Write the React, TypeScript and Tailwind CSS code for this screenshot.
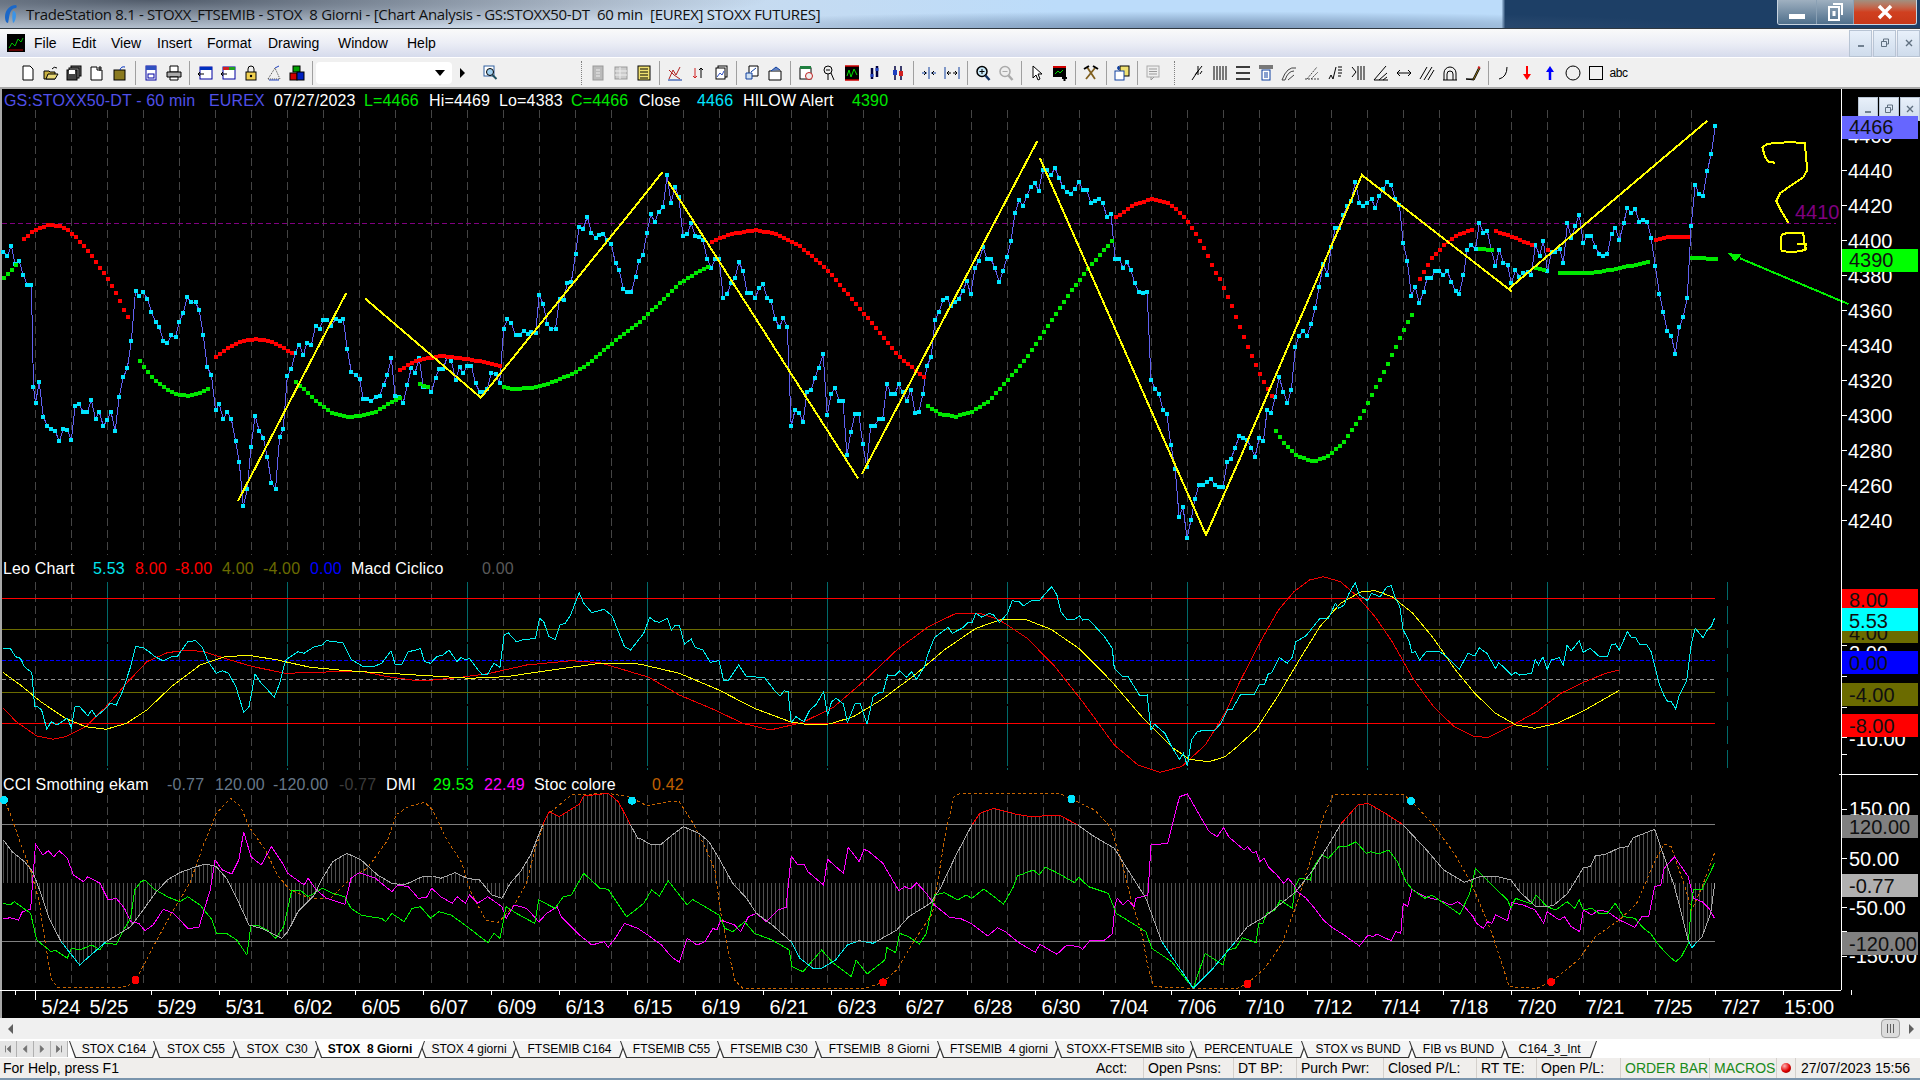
import type { ReactNode } from 'react';

type Pt = [number, number];

// values were read off the reference crops, each crop has its own x scale
const z = (s: string, sx: number, ox: number, oy: number): Pt[] =>
  s.trim().split(/\s+/).map((p) => {
    const [x, y] = p.split(',').map(Number);
    return [x / sx + ox, y / 3 + oy] as Pt;
  });
const t1 = (s: string) => z(s, 2.45, 0, 100);
const t2 = (s: string) => z(s, 2.529, 620, 100);
const t3 = (s: string) => z(s, 2.904, 1220, 100);
const b1 = (s: string) => z(s, 2.45, 0, 550);
const b2 = (s: string) => z(s, 2.529, 620, 570);
const b3 = (s: string) => z(s, 2.904, 1220, 570);

const stitch = (a: Pt[], b: Pt[], c: Pt[]): Pt[] => [
  ...a.filter((p) => p[0] < 638),
  ...b.filter((p) => p[0] >= 638 && p[0] < 1226),
  ...c.filter((p) => p[0] >= 1226),
];
const pts = (p: Pt[]) => p.map(([x, y]) => `${x.toFixed(1)},${y.toFixed(1)}`).join(' ');
const interp = (p: Pt[], x: number) => {
  for (let i = 1; i < p.length; i++) {
    if (x <= p[i][0]) {
      const [x0, y0] = p[i - 1];
      const [x1, y1] = p[i];
      return y0 + ((y1 - y0) * (x - x0)) / (x1 - x0 || 1);
    }
  }
  return p[p.length - 1][1];
};
const grid = (p: Pt[]): Pt[] => {
  const out: Pt[] = [];
  for (let x = 3.5; x <= 1716; x += 4) {
    if (x >= p[0][0] && x <= p[p.length - 1][0]) out.push([x, interp(p, x)]);
  }
  return out;
};

const price = stitch(
  t1(`8,455 18,467 28,438 37,492 47,483 57,525 67,555 77,555 82,860 87,910 96,845 106,950 116,977 126,988 135,992 145,1023 155,987 165,991 175,1020 184,917 194,913 204,936 214,936 224,901 234,957 243,935 253,978 263,960 272,935 282,994 292,890 302,832 312,805 322,722 332,572 341,587 351,575 361,596 371,635 381,665 390,680 400,722 410,729 420,706 430,712 439,665 449,638 459,592 469,607 479,607 488,630 498,706 508,802 518,825 528,930 537,913 547,957 557,935 567,958 577,1022 586,1085 596,1218 606,1168 615,1040 625,948 635,992 645,1013 655,1070 665,1148 675,1167 685,1012 694,986 704,828 714,806 723,760 733,734 743,765 752,730 763,735 773,677 783,686 792,660 802,659 812,677 822,657 832,664 841,658 851,748 861,817 871,824 881,838 890,896 900,896 910,903 920,890 930,887 940,855 949,826 959,775 968,888 978,890 988,908 998,855 1008,803 1017,818 1027,775 1037,860 1047,860 1057,876 1067,835 1076,806 1086,806 1096,770 1106,782 1116,840 1126,802 1135,820 1145,797 1155,797 1165,850 1175,875 1185,875 1194,866 1204,818 1214,823 1224,850 1234,686 1243,658 1253,670 1263,706 1273,706 1283,692 1293,701 1302,696 1312,700 1321,586 1331,613 1341,672 1351,686 1361,686 1371,596 1381,600 1390,550 1400,545 1410,461 1419,380 1429,386 1439,350 1449,398 1459,413 1468,405 1478,401 1488,420 1498,433 1508,490 1517,511 1527,566 1537,575 1547,575 1557,530 1566,482`),
  t2(`48,482 58,466 68,398 78,343 88,366 98,335 109,322 119,225 129,309 139,260 149,292 159,408 170,402 180,370 190,407 200,410 210,420 220,476 231,503 241,478 251,478 261,593 271,581 281,550 291,533 301,487 311,512 322,580 332,580 342,593 352,565 362,553 372,593 382,602 392,656 403,681 413,655 423,680 433,978 443,929 453,938 463,966 473,875 483,870 493,833 503,803 514,763 524,945 534,881 544,865 554,902 564,902 574,1065 584,997 594,943 604,943 614,1033 624,1100 634,977 644,977 654,957 664,957 675,853 685,881 695,881 705,853 715,877 725,903 736,869 746,938 756,935 766,881 776,798 787,771 797,659 807,635 817,601 827,593 837,618 847,606 857,596 867,573 877,544 887,582 898,504 908,483 918,441 928,477 938,477 948,503 959,546 969,512 979,471 989,422 999,340 1009,301 1019,318 1029,288 1039,260 1049,250 1059,272 1069,211 1079,210 1090,226 1100,204 1110,233 1120,260 1130,277 1140,282 1150,267 1161,245 1171,271 1181,271 1191,310 1201,302 1211,296 1221,310 1232,352 1242,343 1252,476 1262,476 1272,503 1282,487 1292,511 1302,550 1312,576 1322,580 1333,575 1343,840 1353,866 1363,881 1373,930 1383,943 1393,1034 1404,1107 1414,1251 1424,1222 1434,1315 1444,1260 1454,1197 1464,1155 1474,1155 1484,1146 1495,1138 1505,1155 1515,1160 1525,1160`),
  t3(`21,1085 32,1077 44,1043 56,1008 68,1013 79,1020 91,1043 102,1070 114,1013 126,1022 137,930 149,939 161,890 172,832 184,875 196,909 207,870 219,741 230,707 242,692 253,707 265,672 277,623 288,560 300,491 312,525 323,440 335,385 347,385 358,345 370,318 381,302 393,245 405,308 416,318 428,308 440,297 451,324 463,287 474,268 486,245 497,256 509,296 521,316 532,428 544,482 556,588 567,560 579,609 591,575 602,533 614,533 625,513 637,513 649,525 660,513 672,545 684,573 695,581 707,525 718,450 730,435 742,447 753,370 765,398 776,392 788,450 800,497 811,450 823,488 835,495 846,550 858,510 869,530 881,518 893,515 904,525 916,434 928,467 939,423 951,513 963,456 974,456 986,446 997,489 1009,370 1020,414 1032,378 1043,344 1055,428 1067,408 1078,408 1090,440 1102,462 1113,467 1125,461 1137,402 1148,385 1160,420 1172,370 1183,323 1194,340 1206,328 1218,366 1229,360 1241,365 1252,413 1264,498 1276,581 1287,635 1299,692 1311,707 1322,762 1334,681 1345,650 1357,593 1368,378 1380,255 1391,282 1403,288 1415,212 1427,161 1438,78`),
);

const hilow: { c: string; p: Pt[] }[] = [
  { c: '#00e800', p: t1('8,535 28,510 38,495') },
  { c: '#ff0000', p: t1('57,418 78,396 100,382 120,375 145,378 165,390 185,412 205,440 225,468 245,505 265,540 285,582 302,628 322,670') },
  { c: '#00e800', p: t1('332,762 350,800 370,830 400,862 430,882 460,888 490,880 518,860') },
  { c: '#ff0000', p: t1('527,773 560,742 590,725 620,718 650,720 685,737 720,765') },
  { c: '#00e800', p: t1('723,845 745,870 780,910 815,940 850,952 880,948 920,935 960,905 985,890') },
  { c: '#ff0000', p: t1('978,810 1020,782 1075,768 1130,775 1180,785 1225,798') },
  { c: '#00e800', p: t1('1027,852 1050,862') },
  { c: '#00e800', p: [...t1('1233,862 1260,867 1300,864 1350,848 1400,822 1440,792 1480,750 1520,708'), ...t2('50,665 100,608 150,550 190,520 230,497')] },
  { c: '#ff0000', p: t2('225,430 270,405 340,390 390,400 450,435 520,505 580,590 640,675 700,765 768,832') },
  { c: '#00e800', p: t2('775,917 810,942 848,950 890,935 930,905 980,840 1030,770 1080,680 1130,590 1180,510 1245,420') },
  { c: '#ff0000', p: [...t2('1250,355 1300,312 1345,298 1390,312 1430,355 1470,430 1510,530'), ...t3('0,540 30,610 60,690 90,765 125,845 150,890')] },
  { c: '#00e800', p: t3('160,992 185,1030 220,1065 270,1086 310,1070 360,1025 405,955 440,885 485,795 530,695 565,628') },
  { c: '#ff0000', p: t3('578,540 610,480 650,435 690,403 740,387') },
  { c: '#00e800', p: t3('742,447 790,450') },
  { c: '#ff0000', p: t3('798,393 850,412 910,436') },
  { c: '#00e800', p: t3('915,503 945,511') },
  { c: '#ff0000', p: t3('945,450 957,450') },
  { c: '#00e800', p: t3('985,519 1080,519 1150,507 1250,484') },
  { c: '#ff0000', p: t3('1262,420 1300,411 1360,411') },
  { c: '#00e800', p: t3('1368,473 1440,477') },
];

const trend: Pt[][] = [
  t1('583,1203 848,580'),
  [...t1('895,596 1178,893 1567,303'), ...t2('108,215')],
  t2('122,245 602,1135'),
  t2('612,1122 1055,124'),
  [...t2('1062,175 1482,1305 1568,1075'), ...t3('412,225 848,575')],
  t3('840,565 1415,62'),
];

const hand = (s: string) => z(s, 3, 1700, 90);

const macdCyan = stitch(
  b1(`8,296 25,295 38,320 50,325 60,350 78,368 85,470 92,470 102,480 115,538 125,515 140,525 152,515 165,505 175,533 184,468 195,470 215,497 225,480 235,500 255,480 270,460 285,465 300,425 320,350 332,290 350,292 365,305 380,320 400,333 420,320 435,318 460,275 480,272 495,290 510,335 530,370 545,362 560,370 578,410 597,487 610,470 625,372 640,400 660,425 672,442 685,400 700,330 730,305 745,310 770,290 790,285 800,272 840,278 860,328 890,350 915,350 935,340 958,302 968,342 985,342 1000,305 1020,300 1030,295 1040,335 1055,340 1070,320 1085,315 1100,300 1120,335 1130,322 1140,330 1150,325 1165,350 1180,372 1195,372 1210,340 1225,352 1235,255 1245,248 1265,275 1280,270 1312,265 1322,205 1332,215 1345,260 1360,268 1372,225 1385,220 1398,195 1419,128 1430,160 1450,188 1480,178 1500,198 1515,245 1530,290 1545,300 1566,260`),
  b2(`45,205 60,190 75,142 90,155 100,157 108,152 120,145 130,180 140,165 150,165 163,222 180,207 190,232 210,240 228,277 250,272 262,330 275,330 300,285 320,320 365,322 390,360 405,378 415,362 425,365 433,458 445,440 465,455 480,420 495,405 515,365 525,437 535,395 547,385 565,402 575,457 595,400 607,400 625,462 640,380 655,368 665,368 677,315 695,318 707,302 725,322 737,305 750,328 770,290 778,255 795,203 830,172 840,190 865,175 880,158 890,158 900,130 915,142 935,130 945,135 960,158 980,130 992,92 1010,95 1020,108 1040,92 1062,90 1080,65 1092,50 1105,75 1115,125 1130,148 1150,148 1162,138 1170,150 1185,148 1210,180 1225,200 1245,235 1250,295 1270,318 1285,320 1315,378 1333,375 1343,480 1352,463 1378,490 1395,530 1415,568 1425,550 1435,588 1445,510 1460,485 1480,480 1505,480 1520,460 1535,425 1550,415 1565,380`),
  b3(`22,420 35,418 60,373 100,373 115,342 130,342 140,312 150,308 172,262 195,280 210,262 220,215 250,197 290,145 315,145 335,100 345,115 360,105 375,70 393,38 405,75 428,92 440,70 465,80 485,50 497,47 510,85 522,110 532,180 550,215 557,248 567,245 580,270 600,243 635,243 660,262 695,298 720,250 740,258 752,233 775,250 800,295 810,278 847,315 858,307 870,315 905,310 915,268 925,285 938,260 950,298 963,270 985,263 997,285 1008,225 1020,243 1043,212 1055,247 1075,235 1100,258 1125,260 1137,225 1148,222 1160,240 1183,185 1195,203 1207,203 1218,222 1240,225 1252,245 1275,340 1290,378 1300,395 1311,395 1323,417 1334,375 1355,333 1368,225 1380,175 1403,203 1415,180 1427,168 1436,145`),
);
const macdRed = stitch(
  b1('8,475 40,515 90,558 130,568 160,560 210,530 260,470 310,400 360,335 410,308 460,300 500,305 550,325 620,350 700,370 800,366 890,365 950,380 1010,390 1060,390 1130,382 1200,370 1290,345 1400,332 1470,338 1530,360 1562,372'),
  b2('70,320 150,375 240,420 310,460 380,480 460,458 540,412 620,330 700,240 780,170 850,130 910,130 960,150 1030,205 1100,290 1170,395 1250,525 1310,585 1365,607 1420,590 1480,525 1530,430 1568,345'),
  b3('60,330 120,210 170,120 215,65 260,30 300,20 350,35 400,80 450,140 500,215 560,325 620,410 680,470 740,500 780,502 850,465 920,425 990,370 1060,335 1120,310 1158,300'),
);
const macdYellow = stitch(
  b1('8,368 50,405 100,455 160,505 210,530 260,538 310,520 360,480 420,410 490,345 550,320 610,316 680,330 760,352 850,362 950,370 1060,378 1150,385 1240,380 1340,362 1470,340 1562,342'),
  b2('60,285 150,310 250,360 340,415 430,455 470,463 530,462 590,440 660,390 740,320 820,240 900,175 960,150 1025,148 1090,178 1160,235 1240,330 1320,440 1400,535 1440,568 1490,575 1530,560 1568,530'),
  b3('50,530 105,478 170,375 230,270 290,170 350,100 410,65 450,62 500,80 560,130 620,205 680,295 740,370 800,430 860,465 915,475 980,460 1060,420 1158,362'),
);

const magenta = stitch(
  b1(`8,1107 25,1103 45,1110 55,1085 75,1078 87,882 105,915 118,902 132,920 145,902 165,925 180,975 205,995 215,980 245,1000 265,1050 285,1045 305,1075 320,1115 340,1120 355,1142 375,1125 400,1078 425,1090 460,1135 487,1133 515,1020 527,930 545,960 568,972 585,930 597,845 615,920 640,945 665,890 690,935 705,970 745,1005 755,985 775,1020 800,1045 845,1063 860,985 880,968 920,985 960,1025 975,1005 1000,1010 1025,1045 1045,1042 1058,1015 1080,1040 1108,1060 1120,1040 1140,1060 1150,1035 1170,1060 1195,1040 1230,1070 1240,1105 1260,1065 1290,1075 1320,1115 1340,1090 1365,1070 1375,1100 1415,1150 1450,1185 1480,1175 1490,1192 1510,1160 1530,1120 1562,1135`),
  b2(`70,1095 105,1125 130,1160 150,1177 170,1105 195,1125 215,1115 235,1075 245,1080 255,1050 290,1065 305,1085 325,1040 345,1030 370,1055 400,1020 420,1012 433,858 450,885 465,882 475,905 515,945 525,868 565,910 577,832 605,875 617,838 630,845 665,880 705,962 720,950 735,957 750,938 775,970 795,1005 835,1043 860,1045 890,1062 930,1098 955,1073 975,1085 1005,1115 1050,1147 1062,1123 1105,1153 1130,1125 1160,1130 1170,1138 1190,1110 1225,1110 1245,1092 1252,1005 1258,985 1272,1005 1285,990 1300,1010 1305,985 1335,975 1343,825 1385,820 1415,680 1435,672 1470,745 1490,785 1510,800 1527,772 1540,805 1568,830`),
  b3(`25,800 70,840 80,830 95,848 105,845 115,875 128,865 140,890 165,915 185,940 198,925 215,945 225,965 250,985 275,1015 300,1050 325,1072 360,1095 405,1128 430,1095 445,1100 455,1092 497,1112 510,1085 525,1090 532,1000 545,1010 557,958 575,970 600,982 635,990 670,1005 690,995 710,1010 735,1040 745,1060 765,1075 777,1055 790,1060 800,1035 835,1052 847,998 880,1005 915,1020 940,1060 950,1025 985,1050 1000,1040 1020,1070 1045,1085 1055,1020 1080,1035 1100,1020 1125,1025 1160,1050 1205,1072 1225,1040 1245,1040 1262,950 1280,945 1290,895 1320,860 1340,890 1360,920 1375,985 1400,995 1420,1015 1436,1045`),
);
const dmi = stitch(
  b1(`8,1060 25,1065 35,1055 75,1090 90,1170 125,1205 135,1200 165,1225 175,1195 195,1200 225,1185 245,1200 255,1180 285,1183 305,1135 320,1105 330,1020 345,995 355,990 375,1015 410,1040 440,1055 460,1040 490,1065 520,1110 530,1150 555,1150 580,1170 605,1215 615,1125 630,1125 655,1140 675,1165 695,1130 715,1020 735,1020 755,1040 790,1015 815,1030 845,1040 860,1075 885,1095 905,1100 935,1105 945,1115 960,1090 990,1115 1010,1075 1030,1070 1055,1105 1075,1085 1105,1095 1145,1130 1195,1178 1210,1150 1225,1165 1240,1070 1265,1090 1310,1120 1320,1050 1360,1075 1380,1040 1400,1035 1430,970 1470,1015 1490,1018 1535,1100 1562,1075`),
  b2(`60,1000 80,960 100,978 122,932 170,1005 183,988 250,1035 265,1075 285,1085 315,1055 340,1090 385,1110 428,1140 435,1190 463,1205 510,1140 540,1180 585,1220 597,1170 625,1212 670,1170 675,1133 697,1148 707,1090 730,1100 757,1122 775,1090 795,975 820,968 855,990 875,975 890,985 920,957 970,1002 995,950 1005,918 1045,900 1060,915 1075,892 1100,905 1150,938 1160,922 1185,950 1235,970 1255,1030 1330,1085 1345,1135 1395,1175 1450,1255 1480,1150 1525,1185 1535,1155 1568,1100`),
  b3(`20,1140 45,1135 65,1103 105,1118 112,1060 125,1060 135,1030 160,1020 175,990 210,1015 218,950 230,925 262,930 270,895 295,855 315,865 345,830 370,828 395,815 425,850 438,845 460,852 490,840 515,875 540,935 560,960 595,985 615,975 650,1000 697,1033 725,970 742,895 790,945 835,990 845,1015 858,985 905,1002 918,975 950,1010 975,1020 1008,995 1030,1015 1043,990 1055,1020 1080,1015 1100,1030 1125,1030 1148,1000 1172,1040 1205,1045 1230,1075 1250,1090 1270,1120 1300,1155 1323,1175 1340,1160 1360,1120 1368,1015 1375,958 1400,958 1436,880`),
);
const cci = stitch(
  b1(`8,870 30,905 60,935 80,965 100,1030 120,1105 150,1175 195,1245 260,1175 320,1130 345,1090 380,1030 410,990 440,968 480,950 505,942 530,950 555,985 580,1045 610,1125 640,1135 665,1150 690,1165 705,1145 730,1085 770,1035 790,985 815,935 850,910 885,930 925,975 960,1000 990,1005 1035,980 1060,978 1080,985 1115,968 1145,985 1175,990 1205,1035 1230,1045 1250,1000 1275,965 1300,915 1330,823 1345,785 1370,800 1420,762 1430,738 1490,730 1515,755 1545,825 1562,865`),
  b2(`50,805 75,822 105,822 130,797 160,770 200,790 225,815 250,865 285,940 320,985 345,1030 385,1065 433,1115 455,1165 490,1197 510,1195 545,1170 575,1125 605,1112 640,1120 700,1080 730,1040 785,1000 810,955 850,855 890,765 910,730 945,715 1000,732 1040,740 1110,735 1155,763 1200,800 1250,835 1290,910 1330,985 1370,1115 1450,1255 1500,1195 1568,1100`),
  b3(`45,1115 80,1070 130,1040 220,965 270,900 330,800 350,763 400,705 430,700 480,730 530,763 600,840 650,900 710,937 760,918 800,918 845,930 870,965 915,1008 950,1010 970,1005 1010,970 1055,893 1075,890 1090,858 1120,853 1160,833 1185,830 1200,803 1245,785 1262,778 1320,950 1360,1112 1370,1133 1400,1100 1425,1030 1437,940`),
);
const stoc = stitch(
  b1(`8,745 25,790 50,880 75,960 95,1050 110,1170 125,1285 140,1312 280,1313 310,1310 332,1290 350,1250 380,1180 420,1090 465,1000 500,880 530,790 565,745 590,770 610,830 650,900 680,975 710,1020 760,1045 810,1045 860,985 900,955 950,870 970,795 1000,770 1040,757 1060,780 1095,870 1130,935 1155,1030 1190,1110 1220,1118 1260,1065 1290,1000 1310,900 1340,795 1400,735 1490,730 1540,740`),
  b2(`70,708 120,695 150,695 185,760 215,830 240,900 255,1030 270,1120 290,1230 310,1255 620,1255 665,1237 700,1200 740,1120 790,1030 800,960 825,780 845,680 860,670 1110,670 1142,687 1200,720 1240,770 1270,880 1295,1000 1320,1090 1335,1190 1350,1250 1450,1255 1520,1255`),
  b3(`50,1255 80,1240 130,1195 180,1120 220,1010 260,880 300,740 330,672 530,672 555,692 620,765 680,850 730,940 790,1090 840,1250 920,1255 960,1237 1040,1170 1090,1100 1160,1050 1210,1000 1260,880 1290,822 1310,830 1350,950 1370,1020 1400,950 1436,850`),
);

const gridX = Array.from({ length: 47 }, (_, i) => 35.5 + 36 * i);
const teal = gridX.filter((_, i) => i % 5 === 2);
const priceAxis: [string, number][] = [['4460', 135.5], ['4440', 170.5], ['4420', 205.5], ['4400', 240.5], ['4380', 275.5], ['4360', 310.5], ['4340', 345.5], ['4320', 380.5], ['4300', 415.5], ['4280', 450.5], ['4260', 485.5], ['4240', 520.5]];
const dates = ['5/25', '5/29', '5/31', '6/02', '6/05', '6/07', '6/09', '6/13', '6/15', '6/19', '6/21', '6/23', '6/27', '6/28', '6/30', '7/04', '7/06', '7/10', '7/12', '7/14', '7/18', '7/20', '7/21', '7/25', '7/27', '15:00'];

function Chart() {
  return (
    <svg viewBox="0 89 1920 929" shapeRendering="crispEdges" className="absolute inset-0 h-full w-full">
      <defs>
        <clipPath id="over"><rect x="0" y="780" width="1840" height="44.5" /></clipPath>
        <clipPath id="under"><rect x="0" y="941.5" width="1840" height="50" /></clipPath>
      </defs>
      <rect x="0" y="89" width="1.5" height="929" fill="#a8a8a8" />
      {gridX.map((x) => (
        <g key={x} stroke="#444444" strokeDasharray="8 4">
          <line x1={x} x2={x} y1={110} y2={555} />
          {!teal.includes(x) && <line x1={x} x2={x} y1={582} y2={770} />}
          <line x1={x} x2={x} y1={795} y2={987} />
        </g>
      ))}
      {[...teal, 1727.5].map((x) => (
        <line key={x} x1={x} x2={x} y1={582} y2={770} stroke="#006a6a" strokeDasharray={x > 1700 ? '18 6' : '60 2'} />
      ))}

      {/* price panel */}
      <line x1="2" x2="1836" y1="223.5" y2="223.5" stroke="#800080" strokeDasharray="5 3" />
      <polyline points={pts(price)} fill="none" stroke="#6060f0" />
      {price.map(([x, y], i) => (
        <rect key={i} x={Math.round(x) - 2} y={Math.round(y) - 2} width="4" height="4" fill="#00e5ff" />
      ))}
      {hilow.map((s, i) =>
        grid(s.p).map(([x, y]) => <rect key={`${i}-${x}`} x={Math.round(x) - 2} y={Math.round(y) - 2} width="4" height="4" fill={s.c} />),
      )}
      {trend.map((p, i) => (
        <polyline key={i} points={pts(p)} fill="none" stroke="#ffff00" strokeWidth="2" />
      ))}
      <polyline points={pts(hand('224,218 205,215 195,200 187,172 200,163 225,158 280,157 315,160 317,190 322,240 310,262 265,292 240,310 229,333 245,365 265,398'))} fill="none" stroke="#ffff00" strokeWidth="2" />
      <polyline points={pts(hand('245,432 275,428 310,430 313,460 318,478 300,484 270,486 245,483 242,460 245,432'))} fill="none" stroke="#ffff00" strokeWidth="2" />
      <polyline points={pts(hand('290,462 318,462 312,482'))} fill="none" stroke="#ffff00" strokeWidth="2" />
      <polyline points={pts(hand('445,642 120,505'))} fill="none" stroke="#00f000" strokeWidth="2" />
      <polygon points={pts(hand('85,490 125,492 105,516'))} fill="#00f000" />
      <text x="1795" y="219" fill="#800080" className="text-[20px]">4410</text>

      {/* macd panel */}
      <line x1="2" x2="1715" y1="598.5" y2="598.5" stroke="#ff0000" />
      <line x1="2" x2="1715" y1="629.5" y2="629.5" stroke="#6b6b00" />
      <line x1="2" x2="1715" y1="660.5" y2="660.5" stroke="#0000ff" strokeDasharray="4 2" />
      <line x1="2" x2="1715" y1="679.5" y2="679.5" stroke="#909090" strokeDasharray="4 3" />
      <line x1="2" x2="1715" y1="692.5" y2="692.5" stroke="#6b6b00" />
      <line x1="2" x2="1715" y1="723.5" y2="723.5" stroke="#ff0000" />
      <polyline points={pts(macdRed)} fill="none" stroke="#f00000" />
      <polyline points={pts(macdYellow)} fill="none" stroke="#ffff00" />
      <polyline points={pts(macdCyan)} fill="none" stroke="#00f0f0" />

      {/* cci panel */}
      {grid(cci).map(([x, y]) => (
        <line key={x} x1={x} x2={x} y1={882.5} y2={y} stroke="#505050" />
      ))}
      <line x1="2" x2="1715" y1="824.5" y2="824.5" stroke="#808080" />
      <line x1="2" x2="1715" y1="941.5" y2="941.5" stroke="#808080" />
      <polyline points={pts(stoc)} fill="none" stroke="#c86400" strokeDasharray="3 2.5" />
      <polyline points={pts(magenta)} fill="none" stroke="#ff00ff" />
      <polyline points={pts(dmi)} fill="none" stroke="#00f000" />
      <polyline points={pts(cci)} fill="none" stroke="#a8a8a8" />
      <polyline points={pts(cci)} fill="none" stroke="#ff0000" clipPath="url(#over)" />
      <polyline points={pts(cci)} fill="none" stroke="#00f0f0" clipPath="url(#under)" />
      {[[4, 800], [632, 800.7], [1071.5, 799], [1411, 801]].map(([x, y]) => (
        <circle key={x} cx={x} cy={y} r="4" fill="#00e5ff" />
      ))}
      {[[135.5, 980], [883, 982.3], [1247.5, 984], [1551, 982]].map(([x, y]) => (
        <circle key={x} cx={x} cy={y} r="4" fill="#ff0000" />
      ))}

      {/* time axis */}
      <line x1="0" x2="1841" y1="990.5" y2="990.5" stroke="#fff" />
      <line x1="1841" x2="1841" y1="89" y2="990" stroke="#fff" />
      <line x1="35" x2="35" y1="990" y2="1000" stroke="#fff" />
      <line x1="15" x2="15" y1="990" y2="995" stroke="#fff" />
      <text x="61" y="1014" fill="#fff" textAnchor="middle" className="text-[20px]">5/24</text>
      {dates.map((d, i) => (
        <g key={d}>
          <line x1={151 + 68 * i} x2={151 + 68 * i} y1="990" y2="995" stroke="#fff" />
          <text x={109 + 68 * i} y="1014" fill="#fff" textAnchor="middle" className="text-[20px]">{d}</text>
        </g>
      ))}

      {/* value axis */}
      {priceAxis.map(([l, y]) => (
        <g key={l}>
          <line x1="1841" x2="1847" y1={y} y2={y} stroke="#fff" />
          <text x="1848" y={y + 7} fill="#fff" className="text-[20px]">{l}</text>
        </g>
      ))}
      {[645.5, 676.5, 707.5, 737.5, 754.5, 809.5, 858.5, 907.5, 931.5, 956.5].map((y) => (
        <line key={y} x1="1841" x2="1847" y1={y} y2={y} stroke="#fff" />
      ))}
      <line x1="1839" x2="1918" y1="774.5" y2="774.5" stroke="#fff" />
      {[['2.00', 660], ['-10.00', 745.7], ['150.00', 816], ['50.00', 865.7], ['-50.00', 914.7], ['-150.00', 963]].map(([l, y]) => (
        <text key={l} x="1849" y={y} fill="#fff" className="text-[20px]">{l}</text>
      ))}
      {[
        ['4466', 116, 23, 134.3, '#6666ff'],
        ['4390', 249, 23, 267.3, '#00ff00'],
        ['8.00', 589, 19, 607, '#ff0000'],
        ['4.00', 631, 12, 640, '#6b6b00'],
        ['5.53', 608, 23, 628, '#00ffff'],
        ['0.00', 651, 23, 670, '#0000ff'],
        ['-4.00', 683, 23, 701.7, '#6b6b00'],
        ['-8.00', 714, 23, 732.7, '#ff0000'],
        ['120.00', 815, 23, 834, '#808080'],
        ['-0.77', 874, 23, 893, '#b0b0b0'],
        ['-120.00', 932, 23, 951, '#808080'],
      ].map(([l, y, h, b, c]) => (
        <g key={l as string}>
          <rect x="1842" y={y} width="76" height={h} fill={c as string} />
          <text x="1849" y={b} fill="#101010" className="text-[20px]">{l}</text>
        </g>
      ))}
    </svg>
  );
}

type Item = { t: string; c: string; w: string };
const legend1: Item[] = [
  { t: 'GS:STOXX50-DT - 60 min', c: 'text-[#5050e8]', w: 'w-[205px]' },
  { t: 'EUREX', c: 'text-[#5050e8]', w: 'w-[65px]' },
  { t: '07/27/2023', c: 'text-white', w: 'w-[90px]' },
  { t: 'L=4466', c: 'text-[#00e800]', w: 'w-[65px]' },
  { t: 'Hi=4469', c: 'text-white', w: 'w-[70px]' },
  { t: 'Lo=4383', c: 'text-white', w: 'w-[72px]' },
  { t: 'C=4466', c: 'text-[#00e800]', w: 'w-[68px]' },
  { t: 'Close', c: 'text-white', w: 'w-[58px]' },
  { t: '4466', c: 'text-[#00e5ff]', w: 'w-[46px]' },
  { t: 'HILOW Alert', c: 'text-white', w: 'w-[109px]' },
  { t: '4390', c: 'text-[#00e800]', w: 'w-[40px]' },
];
const legend2: Item[] = [
  { t: 'Leo Chart', c: 'text-white', w: 'w-[90px]' },
  { t: '5.53', c: 'text-[#00e5ee]', w: 'w-[42px]' },
  { t: '8.00', c: 'text-[#ff0000]', w: 'w-[40px]' },
  { t: '-8.00', c: 'text-[#ff0000]', w: 'w-[47px]' },
  { t: '4.00', c: 'text-[#6b6b00]', w: 'w-[41px]' },
  { t: '-4.00', c: 'text-[#6b6b00]', w: 'w-[47px]' },
  { t: '0.00', c: 'text-[#0000ff]', w: 'w-[41px]' },
  { t: 'Macd Ciclico', c: 'text-white', w: 'w-[131px]' },
  { t: '0.00', c: 'text-[#5a5a5a]', w: 'w-[40px]' },
];
const legend3: Item[] = [
  { t: 'CCI Smothing ekam', c: 'text-white', w: 'w-[164px]' },
  { t: '-0.77', c: 'text-[#667788]', w: 'w-[48px]' },
  { t: '120.00', c: 'text-[#667788]', w: 'w-[58px]' },
  { t: '-120.00', c: 'text-[#667788]', w: 'w-[66px]' },
  { t: '-0.77', c: 'text-[#3c3c3c]', w: 'w-[47px]' },
  { t: 'DMI', c: 'text-white', w: 'w-[47px]' },
  { t: '29.53', c: 'text-[#00ff00]', w: 'w-[51px]' },
  { t: '22.49', c: 'text-[#ff00ff]', w: 'w-[50px]' },
  { t: 'Stoc colore', c: 'text-white', w: 'w-[118px]' },
  { t: '0.42', c: 'text-[#c06000]', w: 'w-[40px]' },
];

function Legend({ items, className }: { items: Item[]; className: string }) {
  return (
    <div className={`absolute flex h-[18px] whitespace-nowrap text-[16px] leading-[18px] tracking-[0.15px] ${className}`}>
      {items.map((it, i) => (
        <span key={i} className={`${it.w} ${it.c}`}>{it.t}</span>
      ))}
    </div>
  );
}

function Ic({ children }: { children: ReactNode }) {
  return (
    <span className="flex h-[24px] w-[23px] shrink-0 items-center justify-center">
      <svg viewBox="0 0 16 16" className="h-4 w-4">{children}</svg>
    </span>
  );
}
const Sep = () => <span className="mx-[3.5px] h-[24px] w-px shrink-0 bg-[#a0a0a0]" />;
const Grip = ({ className }: { className: string }) => <span className={`h-[24px] w-0 shrink-0 border-l border-dotted border-[#808080] ${className}`} />;

const k = { stroke: '#000', fill: 'none' };
const g = { stroke: '#999', fill: 'none' };

function Toolbar() {
  return (
    <div className="flex h-[32px] shrink-0 items-center border-t border-b-2 border-t-white border-b-[#a8a8a8] bg-[#f0f0f0] pl-[16px]">
      <Ic><path d="M3 1h7l3 3v11H3z" fill="#fff" stroke="#000" /></Ic>
      <Ic><path d="M1 6h5l1 1h5v7H1z" fill="#c8b040" stroke="#000" /><path d="M3 14l2-5h10l-3 5z" fill="#e8d878" stroke="#000" /><path d="M9 4q2-3 5-1" {...k} /></Ic>
      <Ic><rect x="5" y="1" width="10" height="10" fill="#666" stroke="#000" /><rect x="3" y="3" width="10" height="10" fill="#999" stroke="#000" /><rect x="1" y="5" width="10" height="10" fill="#444" stroke="#000" /><rect x="3" y="5" width="6" height="4" fill="#fff" /></Ic>
      <Ic><path d="M2 2h6v3h5v10H2z" fill="#fff" stroke="#000" /><path d="M11 1v5M9 3h4" {...k} /></Ic>
      <Ic><rect x="2" y="5" width="11" height="10" fill="#8a7a20" stroke="#000" /><path d="M8 5q1-4 5-3" stroke="#0030c0" fill="none" /></Ic>
      <Sep />
      <Ic><rect x="3" y="1" width="10" height="14" fill="#fff" stroke="#0000a0" /><rect x="3" y="1" width="10" height="4" fill="#3050c0" /><rect x="5" y="9" width="6" height="4" stroke="#0000a0" fill="none" /></Ic>
      <Ic><path d="M4 1h8v6H4z" fill="#fff" stroke="#000" /><path d="M1 7h14v5H1z" fill="#aaa" stroke="#000" /><path d="M4 12h8v3H4z" fill="#fff" stroke="#000" /></Ic>
      <Sep />
      <Ic><rect x="3" y="2" width="12" height="12" fill="#fff" stroke="#0000a0" /><rect x="3" y="2" width="12" height="3" fill="#0030c0" /><path d="M1 9h6M1 9l2-2M1 9l2 2" {...k} /></Ic>
      <Ic><rect x="3" y="2" width="12" height="12" fill="#fff" stroke="#0000a0" /><rect x="3" y="2" width="6" height="3" fill="#d02020" /><rect x="9" y="2" width="6" height="3" fill="#20a020" /><path d="M1 9h6M1 9l2-2M1 9l2 2" {...k} /></Ic>
      <Ic><rect x="3" y="7" width="10" height="8" fill="#f0d050" stroke="#000" /><path d="M5 7V4a3 3 0 016 0v3" {...k} /><circle cx="8" cy="11" r="1.2" /></Ic>
      <Ic><path d="M2 14L9 3l5 11z" stroke="#444" fill="none" strokeDasharray="1 1" /><path d="M9 3l4-2M3 15h10" stroke="#2040c0" fill="none" /></Ic>
      <Ic><rect x="4" y="1" width="7" height="6" fill="#00a000" stroke="#000" /><rect x="1" y="8" width="7" height="7" fill="#d00000" stroke="#000" /><rect x="8" y="7" width="7" height="8" fill="#0020c0" stroke="#000" /></Ic>
      <Sep />
      <div className="relative h-[22px] w-[136px] shrink-0 rounded-sm bg-white">
        <span className="absolute top-[8px] right-[7px] h-0 w-0 border-x-[5px] border-t-[6px] border-x-transparent border-t-black" />
      </div>
      <span className="ml-[8px] h-0 w-0 shrink-0 border-y-[5px] border-l-[5px] border-y-transparent border-l-black" />
      <span className="ml-[13px]" />
      <Ic><rect x="2" y="1" width="10" height="10" fill="#fff" stroke="#3060a0" /><circle cx="8" cy="7" r="3.5" fill="#a0d0f0" stroke="#000" /><path d="M10.5 10l4 4" stroke="#205060" strokeWidth="2" /></Ic>
      <Grip className="ml-[80px] mr-[4px]" />
      <Ic><rect x="3" y="1" width="10" height="14" fill="#bbb" stroke="#999" /><path d="M6 5h4M6 8h4M6 11h4" stroke="#eee" /></Ic>
      <Ic><rect x="2" y="2" width="12" height="12" fill="#ccc" stroke="#999" /><path d="M2 6h12M2 10h12M7 2v12" stroke="#eee" /></Ic>
      <Ic><rect x="2" y="1" width="12" height="14" fill="#f0e070" stroke="#000" /><path d="M4 4h8M4 7h8M4 10h8M4 13h8" {...k} /></Ic>
      <Sep />
      <Ic><path d="M2 14l4-9 3 5 4-8M2 5l5 5 6 4" stroke="#b02020" fill="none" /><path d="M1 15h14" stroke="#0030a0" /></Ic>
      <Ic><path d="M5 3v10M3 11l2 2 2-2" stroke="#d02020" fill="none" /><path d="M11 13V3M9 5l2-2 2 2" stroke="#000" fill="none" /></Ic>
      <Ic><rect x="5" y="1" width="9" height="11" fill="#fff" stroke="#000" /><rect x="3" y="3" width="9" height="11" fill="#fff" stroke="#000" /><path d="M4 12l3-4 2 2 2-4" stroke="#3050c0" fill="none" /></Ic>
      <Sep />
      <Ic><path d="M5 1h9v10H5z" fill="#fff" stroke="#000" /><path d="M2 8h6v6H2z" fill="#d0e0f0" stroke="#1040a0" /><path d="M7 7l5-4" stroke="#1040a0" /></Ic>
      <Ic><path d="M2 6h12v9H2z" fill="#fff" stroke="#000" /><path d="M4 6l5-4 4 3" stroke="#1040a0" fill="#6080c0" /></Ic>
      <Sep />
      <Ic><rect x="2" y="3" width="11" height="11" fill="#fff" stroke="#000" /><rect x="2" y="1" width="11" height="3" fill="#208040" /><circle cx="11" cy="11" r="3.5" fill="#eee" stroke="#c02020" /></Ic>
      <Ic><circle cx="7" cy="5" r="4" fill="#eee" stroke="#000" /><path d="M7 9v6M10 8l3 7M5 5h4" {...k} /></Ic>
      <Ic><rect x="1" y="1" width="14" height="14" fill="#000" /><path d="M3 11l2-6 2 7 3-8 3 6" stroke="#00e000" fill="none" /><path d="M1 1h14M1 15h14" stroke="#d00000" strokeWidth="1.5" /></Ic>
      <Ic><path d="M5 3v11M10 1v11" stroke="#000040" strokeWidth="2.5" /><rect x="3.5" y="9" width="3" height="3" fill="#2040c0" /><rect x="8.5" y="3" width="3" height="3" fill="#2040c0" /></Ic>
      <Ic><path d="M5 1v14M11 1v14" stroke="#000040" strokeWidth="1.5" /><rect x="3" y="5" width="4" height="5" fill="#2040c0" /><rect x="9" y="6" width="4" height="5" fill="#d02020" /></Ic>
      <Sep />
      <Ic><path d="M8 2v12M1 8h5M10 8h5" stroke="#1040a0" /><path d="M3 6l2 2-2 2M13 6l-2 2 2 2" {...k} /></Ic>
      <Ic><path d="M1 2v12M15 2v12" stroke="#1040a0" /><path d="M3 8h4M9 8h4M3 8l2-2M3 8l2 2M13 8l-2-2M13 8l-2 2" {...k} /></Ic>
      <Sep />
      <Ic><circle cx="7" cy="6.5" r="5" fill="#c8e8f8" stroke="#000" strokeWidth="1.5" /><path d="M7 4v5M4.5 6.5h5" stroke="#000" /><path d="M10.5 10.5l4 4.5" stroke="#103060" strokeWidth="2.5" /></Ic>
      <Ic><circle cx="7" cy="6.5" r="5" fill="#eee" stroke="#aaa" strokeWidth="1.5" /><path d="M4.5 6.5h5" stroke="#aaa" /><path d="M10.5 10.5l4 4.5" stroke="#aaa" strokeWidth="2.5" /></Ic>
      <Sep />
      <Ic><path d="M4 1v12l3-3 2 5 2-1-2-5h4z" fill="#fff" stroke="#000" /></Ic>
      <Ic><rect x="1" y="3" width="13" height="9" fill="#000" /><path d="M1 2h13" stroke="#d00000" strokeWidth="2" /><path d="M3 9l3-3 2 2 3-3" stroke="#00e000" fill="none" /><path d="M10 13h5M12.5 10v6" stroke="#000" strokeWidth="2" /></Ic>
      <Sep />
      <Ic><path d="M3 14L12 3M12 14L4 2" stroke="#806020" strokeWidth="1.8" /><path d="M1 4l5-3M10 1l5 3" stroke="#000" strokeWidth="2" /></Ic>
      <Sep />
      <Ic><rect x="6" y="1" width="9" height="10" fill="#f0e070" stroke="#000" /><rect x="1" y="6" width="9" height="9" fill="#fff" stroke="#1040a0" /><path d="M3 3h3M4.5 1v4" stroke="#1040a0" strokeWidth="1.5" /></Ic>
      <Sep />
      <Ic><rect x="2" y="1" width="12" height="11" fill="#eee" stroke="#aaa" /><path d="M4 4h8M4 6.5h8M4 9h8M6 12v3l3-3" {...g} /></Ic>
      <Grip className="mx-[10px]" />
      <Ic><path d="M3 15L9 6M9 1v9M13 1L6 10M13 6l-2 3" {...k} /></Ic>
      <Ic><path d="M2 1v14M5 1v14M8 1v14M11 1v14M14 1v14" {...k} /></Ic>
      <Ic><path d="M1 2h14M1 8h14M1 14h14" stroke="#000" strokeWidth="1.3" /></Ic>
      <Ic><path d="M1 1h14M1 3h14" {...k} /><rect x="4" y="5" width="8" height="10" fill="#fff" stroke="#1040a0" /><path d="M6 8h4M6 10h4M6 12h4" stroke="#1040a0" /></Ic>
      <Ic><path d="M1 15q5-14 14-12M4 15q3-9 9-9M7 15l6-5M1 15h3" stroke="#444" fill="none" /></Ic>
      <Ic><path d="M1 14h14M3 14L13 2M7 14L14 7" stroke="#444" fill="none" strokeDasharray="2 1" /></Ic>
      <Ic><path d="M2 14l2-4 2 4 3-12M11 2h4M11 5h4M11 8h4M11 11h3" {...k} /></Ic>
      <Ic><path d="M2 2l4 5-4 5M8 1v14M11 1v14M14 1v14" {...k} /></Ic>
      <Ic><path d="M1 15L13 1M1 15h14M6 15L14 8M10 15l4-3" {...k} /></Ic>
      <Ic><path d="M1 8h14M1 8l3-3M1 8l3 3M15 8l-3-3M15 8l-3 3" {...k} /></Ic>
      <Ic><path d="M1 14L8 2M5 15l8-13M9 15l6-10" {...k} /></Ic>
      <Ic><path d="M2 15V8a6 6 0 0112 0v7M5 15V9a3 3 0 016 0v6M1 15h14" {...k} /></Ic>
      <Ic><path d="M1 14h7l6-12 1 1-6 12z" fill="#f0c020" stroke="#000" /><path d="M13 2l2 1" stroke="#d02020" strokeWidth="2" /></Ic>
      <Sep />
      <Ic><path d="M3 14q8-2 8-12" {...k} /></Ic>
      <Ic><path d="M8 1v9" stroke="#ff0000" strokeWidth="2" /><path d="M4 9h8l-4 6z" fill="#ff0000" /></Ic>
      <Ic><path d="M8 15V6" stroke="#0000ff" strokeWidth="2.5" /><path d="M4 7h8L8 1z" fill="#0000ff" /></Ic>
      <Ic><circle cx="8" cy="8" r="7" {...k} /></Ic>
      <Ic><rect x="1.5" y="1.5" width="13" height="13" {...k} /></Ic>
      <span className="w-[23px] shrink-0 text-center text-[12px] tracking-[-0.5px] text-black">abc</span>
    </div>
  );
}

const menu = [
  { t: 'File', w: 'w-[38px]' },
  { t: 'Edit', w: 'w-[39px]' },
  { t: 'View', w: 'w-[46px]' },
  { t: 'Insert', w: 'w-[50px]' },
  { t: 'Format', w: 'w-[61px]' },
  { t: 'Drawing', w: 'w-[70px]' },
  { t: 'Window', w: 'w-[69px]' },
  { t: 'Help', w: 'w-[40px]' },
];

function MdiButtons({ className, size }: { className: string; size: string }) {
  return (
    <div className={`flex gap-px ${className}`}>
      {['min', 'restore', 'close'].map((b) => (
        <span key={b} className={`flex items-center justify-center border border-[#b8c4d4] bg-gradient-to-b from-[#e8f0fa] to-[#cfdcec] ${size}`}>
          {b === 'min' && <span className="mt-[5px] h-[2px] w-[6px] bg-[#708090]" />}
          {b === 'restore' && (
            <svg viewBox="0 0 10 10" className="h-[10px] w-[10px]"><path d="M3.5 3V1h5v5h-2M1.5 3.5h5v5h-5z" fill="none" stroke="#607080" /></svg>
          )}
          {b === 'close' && (
            <svg viewBox="0 0 10 10" className="h-[10px] w-[10px]"><path d="M2 2l6 6M8 2l-6 6" stroke="#607080" strokeWidth="1.4" /></svg>
          )}
        </span>
      ))}
    </div>
  );
}

const tabs = [
  { t: 'STOX C164', w: 'w-[90px]' },
  { t: 'STOX C55', w: 'w-[86px]' },
  { t: 'STOX  C30', w: 'w-[88px]' },
  { t: 'STOX  8 Giorni', w: 'w-[110px]', on: true },
  { t: 'STOX 4 giorni', w: 'w-[100px]' },
  { t: 'FTSEMIB C164', w: 'w-[113px]' },
  { t: 'FTSEMIB C55', w: 'w-[103px]' },
  { t: 'FTSEMIB C30', w: 'w-[104px]' },
  { t: 'FTSEMIB  8 Giorni', w: 'w-[128px]' },
  { t: 'FTSEMIB  4 giorni', w: 'w-[124px]' },
  { t: 'STOXX-FTSEMIB sito', w: 'w-[141px]' },
  { t: 'PERCENTUALE', w: 'w-[117px]' },
  { t: 'STOX vs BUND', w: 'w-[114px]' },
  { t: 'FIB vs BUND', w: 'w-[99px]' },
  { t: 'C164_3_Int', w: 'w-[95px]' },
];

function TabBar() {
  return (
    <div className="flex h-[17px] shrink-0 items-stretch bg-white">
      <div className="flex w-[75px] shrink-0">
        {['M3 2v8M9 2L5 6l4 4z', 'M8 2L4 6l4 4z', 'M4 2l4 4-4 4z', 'M9 2v8M3 2l4 4-4 4z'].map((d) => (
          <span key={d} className="flex h-[16px] w-[17px] items-center justify-center border-r border-[#b0b0b0] bg-[#e4e4e4]">
            <svg viewBox="0 0 12 12" className="h-[10px] w-[10px]"><path d={d} fill="#707070" stroke="#707070" /></svg>
          </span>
        ))}
      </div>
      {tabs.map((tab) => (
        <div
          key={tab.t}
          className={`relative -ml-[6px] h-[17px] shrink-0 bg-[#303030] [clip-path:polygon(0_0,100%_0,calc(100%-6px)_100%,6px_100%)] ${tab.w} ${tab.on ? 'z-10' : ''}`}
        >
          <div
            className={`absolute inset-x-[1px] top-0 bottom-[1px] flex items-center justify-center whitespace-pre text-[12px] [clip-path:polygon(0_0,100%_0,calc(100%-6px)_100%,6px_100%)] ${tab.on ? 'bg-white font-bold' : 'bg-[#f4f4f4]'}`}
          >
            {tab.t}
          </div>
        </div>
      ))}
    </div>
  );
}

const panes = [
  { t: 'Acct:', w: 'w-[52px]', c: 'text-black' },
  { t: 'Open Psns:', w: 'w-[90px]', c: 'text-black' },
  { t: 'DT BP:', w: 'w-[63px]', c: 'text-black' },
  { t: 'Purch Pwr:', w: 'w-[87px]', c: 'text-black' },
  { t: 'Closed P/L:', w: 'w-[93px]', c: 'text-black' },
  { t: 'RT TE:', w: 'w-[60px]', c: 'text-black' },
  { t: 'Open P/L:', w: 'w-[84px]', c: 'text-black' },
  { t: 'ORDER BAR', w: 'w-[89px]', c: 'text-[#1a8a1a]' },
  { t: 'MACROS', w: 'w-[67px]', c: 'text-[#1a8a1a]' },
];

export default function App() {
  return (
    <div className="flex h-screen w-screen flex-col overflow-hidden font-['Liberation_Sans',Arial,sans-serif] text-black">
      {/* title bar */}
      <div className="relative flex h-[28px] shrink-0 items-center bg-[radial-gradient(ellipse_32%_110%_at_8%_0%,rgba(45,55,70,0.75),rgba(45,55,70,0)),radial-gradient(ellipse_28%_60%_at_62%_100%,rgba(70,95,130,0.6),rgba(70,95,130,0)),linear-gradient(to_right,#b8c4d2_0%,#ccdaea_30%,#bcdcfa_55%,#bcdcfa_78.2%,#1d3f66_78.4%,#1d3f66_100%)] pl-[3px]">
        <svg viewBox="0 0 16 20" className="h-[22px] w-[16px] shrink-0">
          <path d="M13 1C6 1 2 7 2 13c0 3 1 6 3 6 1-3 1-9 3-12 1-2 3-3 5-3 1-1 1-2 0-3z" fill="#1c68c8" />
          <path d="M10 7c-1 3-1 8 0 12 2-1 3-5 3-8 0-2-1-4-3-4z" fill="#3a94e8" />
        </svg>
        <span className="ml-[7px] whitespace-pre font-['Open_Sans',sans-serif] text-[15px] tracking-[-0.32px] text-[#101010]">
          TradeStation 8.1 - STOXX_FTSEMIB - STOX  8 Giorni - [Chart Analysis - GS:STOXX50-DT  60 min  [EUREX] STOXX FUTURES]
        </span>
        <div className="absolute top-0 right-[3px] flex h-[25px] overflow-hidden rounded-b-[3px] border border-t-0 border-[#c8d4e0]">
          <span className="flex w-[39px] items-end justify-center border-r border-[#8aa0b4] bg-gradient-to-b from-[#9fb0c0] to-[#50708c] pb-[5px]">
            <span className="h-[5px] w-[16px] bg-white" />
          </span>
          <span className="flex w-[37px] items-center justify-center border-r border-[#8aa0b4] bg-gradient-to-b from-[#9fb0c0] to-[#50708c]">
            <svg viewBox="0 0 16 18" className="h-[18px] w-[16px]"><path d="M6 1h9v11M2 4h10v13H2z" fill="none" stroke="#fff" strokeWidth="2" /><rect x="5.5" y="8" width="3" height="5" fill="#fff" /></svg>
          </span>
          <span className="flex w-[62px] items-center justify-center bg-gradient-to-b from-[#a09080] via-[#d04020] to-[#c83818]">
            <svg viewBox="0 0 18 16" className="h-[16px] w-[18px]"><path d="M3 2l12 12M15 2L3 14" stroke="#fff" strokeWidth="3.5" /></svg>
          </span>
        </div>
      </div>
      <div className="h-px shrink-0 bg-[#303840]" />

      {/* menu */}
      <div className="flex h-[28px] shrink-0 items-center bg-gradient-to-b from-[#fafafa] via-[#eceef6] to-[#d6dbec] pl-[7px] text-[14px]">
        <svg viewBox="0 0 18 18" className="mr-[9px] h-[18px] w-[18px] shrink-0">
          <rect width="18" height="18" fill="#000" />
          <path d="M2 14l3-5 3 3 3-7 3 3 2-4" fill="none" stroke="#00c000" />
          <path d="M2 16h14" stroke="#c00000" />
        </svg>
        {menu.map((m) => (
          <span key={m.t} className={m.w}>{m.t}</span>
        ))}
        <MdiButtons className="ml-auto" size="h-[27px] w-[23px]" />
      </div>

      <Toolbar />

      {/* chart window */}
      <div className="relative min-h-0 flex-1 bg-black">
        <MdiButtons className="absolute top-[8px] right-0" size="h-[24px] w-[20px]" />
        <Chart />
        <Legend items={legend1} className="top-[3px] left-[4px]" />
        <Legend items={legend2} className="top-[471px] left-[3px]" />
        <Legend items={legend3} className="top-[687px] left-[3px]" />
      </div>

      {/* scrollbar */}
      <div className="flex h-[21px] shrink-0 items-center bg-[#f0f0f0] pr-[6px] pl-[8px]">
        <span className="h-0 w-0 border-y-[5px] border-r-[5px] border-y-transparent border-r-[#606060]" />
        <span className="ml-auto flex h-[19px] w-[19px] items-center justify-center gap-[2px] rounded-sm border border-[#a0a0a0] bg-[#dcdcdc]">
          <span className="h-[9px] w-px bg-[#606060]" />
          <span className="h-[9px] w-px bg-[#606060]" />
          <span className="h-[9px] w-px bg-[#606060]" />
        </span>
        <span className="ml-[9px] h-0 w-0 border-y-[5px] border-l-[5px] border-y-transparent border-l-[#606060]" />
      </div>
      <div className="h-[2px] shrink-0 bg-white" />

      <TabBar />

      {/* status bar */}
      <div className="flex h-[20px] shrink-0 items-center whitespace-nowrap bg-[#f0eeec] text-[14px]">
        <span className="w-[1092px] pl-[3px]">For Help, press F1</span>
        {panes.map((p) => (
          <span key={p.t} className={`h-full border-r border-[#d4d0cc] pl-[4px] leading-[20px] ${p.w} ${p.c}`}>{p.t}</span>
        ))}
        <span className="flex h-full w-[19px] items-center justify-center border-r border-[#d4d0cc]">
          <span className="h-[10px] w-[10px] rounded-full bg-[radial-gradient(circle_at_35%_30%,#ffb0b0,#e00000_55%,#600000)]" />
        </span>
        <span className="pl-[5px]">27/07/2023 15:56</span>
      </div>
      <div className="h-[2px] shrink-0 bg-[#7a94ac]" />
    </div>
  );
}
